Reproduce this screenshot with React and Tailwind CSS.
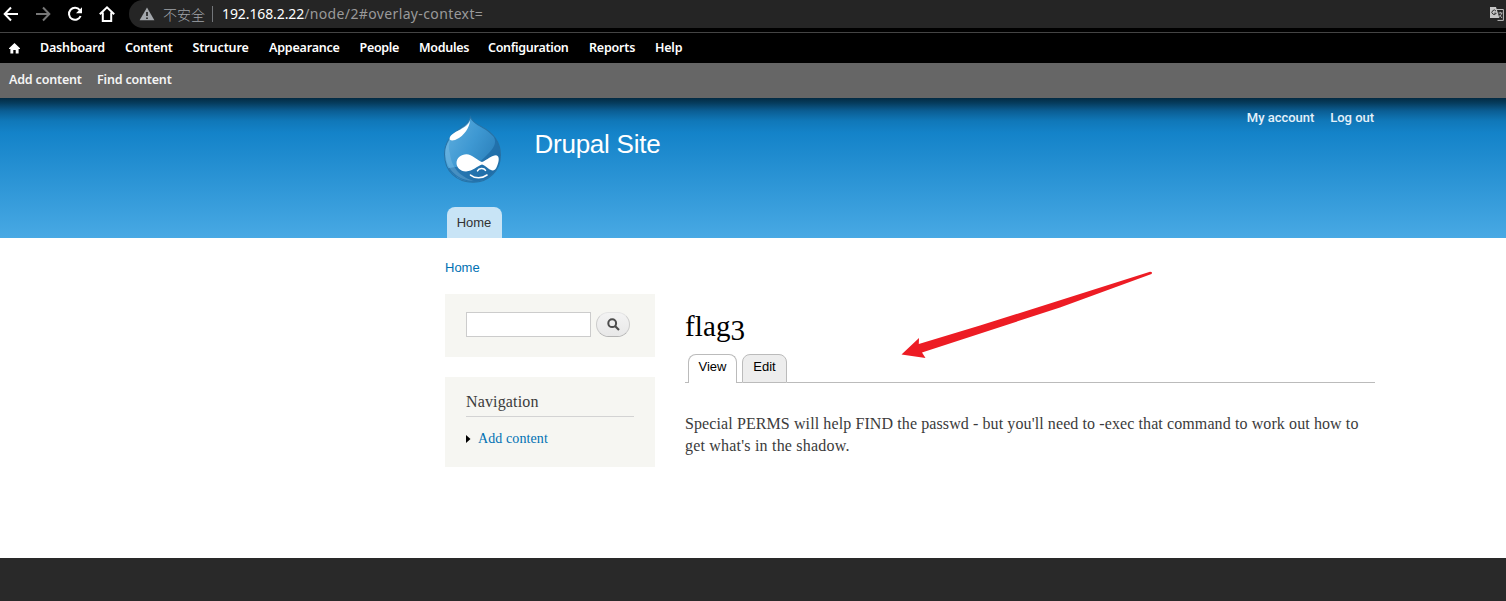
import React from "react";

const MENU = [
  ["Dashboard", "w-[85px] tracking-[-0.17px]"],
  ["Content", "w-[67.5px] tracking-[-0.2px]"],
  ["Structure", "w-[76.5px] tracking-[-0.1px]"],
  ["Appearance", "w-[90.5px] tracking-[-0.2px]"],
  ["People", "w-[59.5px] tracking-[-0.3px]"],
  ["Modules", "w-[69px] tracking-[-0.3px]"],
  ["Configuration", "w-[101px] tracking-[-0.3px]"],
  ["Reports", "w-[66px] tracking-[-0.2px]"],
  ["Help", "w-[40px] tracking-[-0.2px]"],
];

function BrowserBar() {
  return (
    <div className="flex h-[28px] items-start bg-black">
      <svg className="block h-[28px] w-[129px] shrink-0" viewBox="0 0 129 28" fill="none" strokeWidth="2">
        <path d="M18 14H5M11 7.5L4.7 14L11 20.5" stroke="#fff" />
        <path d="M36 14H49M43 7.5L49.3 14L43 20.5" stroke="#777" />
        <path d="M79.8 10.2A6 6 0 1 0 80.6 16" stroke="#fff" />
        <path d="M82 7.3V13.2H76Z" fill="#fff" />
        <path d="M99.8 14.2L107 7.3L114.2 14.2M102.8 12.6V21H111.2V12.6" stroke="#fff" />
      </svg>
      <div className="flex h-[28px] min-w-0 flex-1 items-center rounded-l-full bg-[#252525] pl-[10px] font-['Noto_Sans','Noto_Sans_CJK_SC',sans-serif] text-[14px] leading-[28px]">
        <svg className="block h-[14px] w-[16px]" viewBox="0 0 16 14">
          <path d="M8 0.5L15.4 13.2H0.6Z" fill="#a3a7ac" />
          <path d="M8 5V9M8 10.4V12" stroke="#252525" strokeWidth="1.7" />
        </svg>
        <span className="ml-[8px] w-[43px] whitespace-nowrap font-['Noto_Sans_CJK_SC',sans-serif] font-light text-[#a0a4a9]">不安全</span>
        <span className="ml-[6px] h-[16px] w-px bg-[#73767a]" />
        <span className="ml-[9px] whitespace-nowrap text-[#9a9a9a] tracking-[0.37px]">
          <span className="text-white tracking-[-0.1px]">192.168.2.22</span>/node/2#overlay-context=
        </span>
        <svg className="ml-auto mr-[2px] block h-[14px] w-[14px]" viewBox="0 0 14 14">
          <path d="M5 2.5H13.4V13.4H7.5" fill="none" stroke="#bdbdbd" />
          <path d="M0 0H6L9.4 11H0Z" fill="#c6c6c6" />
          <path d="M6 4.1A2.2 2.2 0 1 0 6.2 6.2H4.2" fill="none" stroke="#333" />
          <path d="M8.500 6H12.5M10.300 4.8V6M11.700 6C11.300 8 10.3 9 9.4 9.6M9.6 8L12 11" fill="none" stroke="#bdbdbd" strokeWidth="0.9" />
        </svg>
      </div>
    </div>
  );
}

function Toolbar() {
  return (
    <div className="font-['Noto_Sans',sans-serif] text-[12.5px] font-semibold">
      <div className="mt-[4px] flex h-[31px] items-start border-t border-[#444] bg-black text-white">
        <svg className="ml-[9px] mt-[10px] block h-[11px] w-[12px]" viewBox="0 0 12 11">
          <path d="M5.5 0L11 5.3V6H9.6V10.5H6.7V7H4.3V10.5H1.4V6H0V5.3Z" fill="#fff" />
        </svg>
        <nav className="ml-[19px] flex leading-[29px]">
          {MENU.map(([label, cls]) => (
            <a key={label} className={"block shrink-0 whitespace-nowrap " + cls}>{label}</a>
          ))}
        </nav>
      </div>
      <div className="flex h-[35px] bg-[#666] pl-[9px] leading-[33px] tracking-[-0.18px] text-[#f4f4f4]">
        <a className="w-[88px] whitespace-nowrap">Add content</a>
        <a className="whitespace-nowrap">Find content</a>
      </div>
    </div>
  );
}

function Logo() {
  return (
    <svg className="block h-[71px] w-[60px]" viewBox="0 0 60 68" preserveAspectRatio="none">
      <defs>
        <linearGradient id="drop" x1="0" y1="0.2" x2="1" y2="0.8">
          <stop offset="0" stopColor="#5dadde" />
          <stop offset="0.45" stopColor="#3e98d2" />
          <stop offset="1" stopColor="#2579b4" />
        </linearGradient>
      </defs>
      <path d="M27.5 2C29 6 32 8 38 11C48 16 57.5 24 57.5 38C57.5 53 46 64.5 30 64.5C14 64.5 1.500 54 1.500 37.5C1.500 25 9 18 17 13C23 9.500 26.500 6 27.500 2Z" fill="url(#drop)" stroke="#2672a6" strokeWidth="1" />
      <path d="M51 21C55 30 47 35 36 46L5 51C12 61 25 66 37 63C50 60 58 49 57 36C56.500 29 54 24 51 21Z" fill="#1c68a2" opacity="0.7" />
      <path d="M2.500 37C3 53 16 63 31 63C20 60 9 53 7 37C5 30 6 27 8 23C4 27 2 32 2.500 37Z" fill="#93c9ea" opacity="0.3" />
      <path d="M27 5C27 9 24 17 16 22C11 25 7 25 6.500 23C7 18 14 16 19 13C24 10 26 8 27 5Z" fill="#fff" />
      <path d="M23.500 37.500C29 37.500 34 43 39 45C44 43 49 38.500 53 38.500C57 39 56 45 54 49C52 54 49 54 45 51C42 49 41 48 39 47.500C34 49 30 54 23 54C17 54 13.500 50 13.500 46C13.500 41 18 37.500 23.500 37.500Z" fill="#fff" />
      <path d="M34.500 53.500C36 50.500 41 50.500 42.500 53" fill="none" stroke="#fff" strokeWidth="1.500" strokeLinecap="round" />
      <path d="M27.500 57.500C32 61 39 61 44 57.500" fill="none" stroke="#fff" strokeWidth="1.600" strokeLinecap="round" />
    </svg>
  );
}

function Header() {
  return (
    <header className="h-[140px] bg-[linear-gradient(to_bottom,#032b43_0px,#063c5d_5px,#0b5e94_13px,#1078b9_23px,#1483c9_35px,#48a9e4_140px)]">
      <div className="ml-[443px] flex h-[109px] w-[932px] items-start">
        <div className="mt-[17px]"><Logo /></div>
        <h1 className="ml-[31.5px] mt-[30px] whitespace-nowrap text-[26px] leading-[32px] tracking-[-0.25px] text-white">Drupal Site</h1>
        <nav className="ml-auto mr-[1px] mt-[10px] flex gap-[16px] font-['Roboto',sans-serif] text-[13px] font-medium leading-[20px] tracking-[-0.03px] text-[#e4f1fa]">
          <a>My account</a>
          <a>Log out</a>
        </nav>
      </div>
      <div className="ml-[447px] flex h-[31px] w-[55px] justify-center rounded-t-[8px] bg-[#c8e4f6] pr-[1px] text-[13px] leading-[31px] text-[#333]">Home</div>
    </header>
  );
}

function Sidebar() {
  return (
    <aside className="w-[210px] shrink-0 font-['Liberation_Serif',serif]">
      <div className="flex h-[63px] items-start bg-[#f6f6f2] pl-[21px] pt-[18px]">
        <div className="h-[25px] w-[125px] border border-[#ccc] bg-white" />
        <div className="ml-[5px] flex h-[25px] w-[34px] items-center justify-center rounded-full border border-[#ccc] border-t-[#e4e4e4] border-b-[#b4b4b4] bg-[linear-gradient(#f3f3f3,#e8e8e8)]">
          <svg className="block h-[13px] w-[13px]" viewBox="0 0 13 13" fill="none" stroke="#4d4d4d">
            <circle cx="5.200" cy="5.200" r="3.900" strokeWidth="2" />
            <path d="M8 8L12 12" strokeWidth="2.200" />
          </svg>
        </div>
      </div>
      <div className="mt-[20px] h-[90px] bg-[#f6f6f2] px-[21px] pt-[14px]">
        <h2 className="h-[26px] border-b border-[#d3d3d3] text-[16px] leading-[22px] tracking-[0.15px] text-[#3b3b3b]">Navigation</h2>
        <div className="mt-[11px] flex items-center leading-[22px]">
          <svg className="block h-[8px] w-[5px]" viewBox="0 0 5 8"><path d="M0 0L4.500 4L0 8Z" fill="#000" /></svg>
          <a className="ml-[7px] whitespace-nowrap text-[14px] tracking-[0.1px] text-[#0071b3]">Add content</a>
        </div>
      </div>
    </aside>
  );
}

function Main() {
  return (
    <main className="ml-[30px] w-[690px] font-['Liberation_Serif',serif]">
      <h1 className="mt-[12px] h-[40px] whitespace-nowrap text-[29px] leading-[40px] tracking-[0.1px] text-black">
        flag<span className="inline-block translate-y-[4px]">3</span>
      </h1>
      <div className="mt-[8px] flex h-[29px] font-['Liberation_Sans',sans-serif] text-[13px] leading-[24px] text-black">
        <div className="w-[3px] border-b border-[#bbb]" />
        <div className="w-[49px] rounded-t-[8px] border border-b-0 border-[#bbb] text-center">View</div>
        <div className="w-[5px] border-b border-[#bbb]" />
        <div className="w-[45px] rounded-t-[8px] border border-[#bbb] bg-[#ededed] text-center">Edit</div>
        <div className="flex-1 border-b border-[#bbb]" />
      </div>
      <p className="mt-[30px] whitespace-nowrap text-[16px] leading-[22px] text-[#3b3b3b]">
        <span className="tracking-[0.1px]">Special PERMS will help FIND the passwd - but you'll need to -exec that command to work out how to</span>
        <br />
        <span className="tracking-[0.2px]">get what's in the shadow.</span>
      </p>
    </main>
  );
}

export default function App() {
  return (
    <div className="relative h-[601px] w-[1506px] overflow-hidden bg-black font-['Liberation_Sans',sans-serif]">
      <BrowserBar />
      <Toolbar />
      <Header />
      <div className="h-[320px] bg-white pl-[445px] pt-[19px]">
        <a className="block text-[13px] leading-[21px] text-[#0071b3]">Home</a>
        <div className="mt-[16px] flex">
          <Sidebar />
          <Main />
        </div>
      </div>
      <footer className="h-[43px] bg-[#292929]" />
      <svg className="absolute left-[890px] top-[260px] h-[110px] w-[280px]" viewBox="0 0 280 110">
        <path d="M11.500 94.500L29 78L28.800 84L90 65.500L260 11.800Q263 12 261.500 14L170 47.500L32 92.500L35.500 98Z" fill="#ed1c24" />
      </svg>
    </div>
  );
}
